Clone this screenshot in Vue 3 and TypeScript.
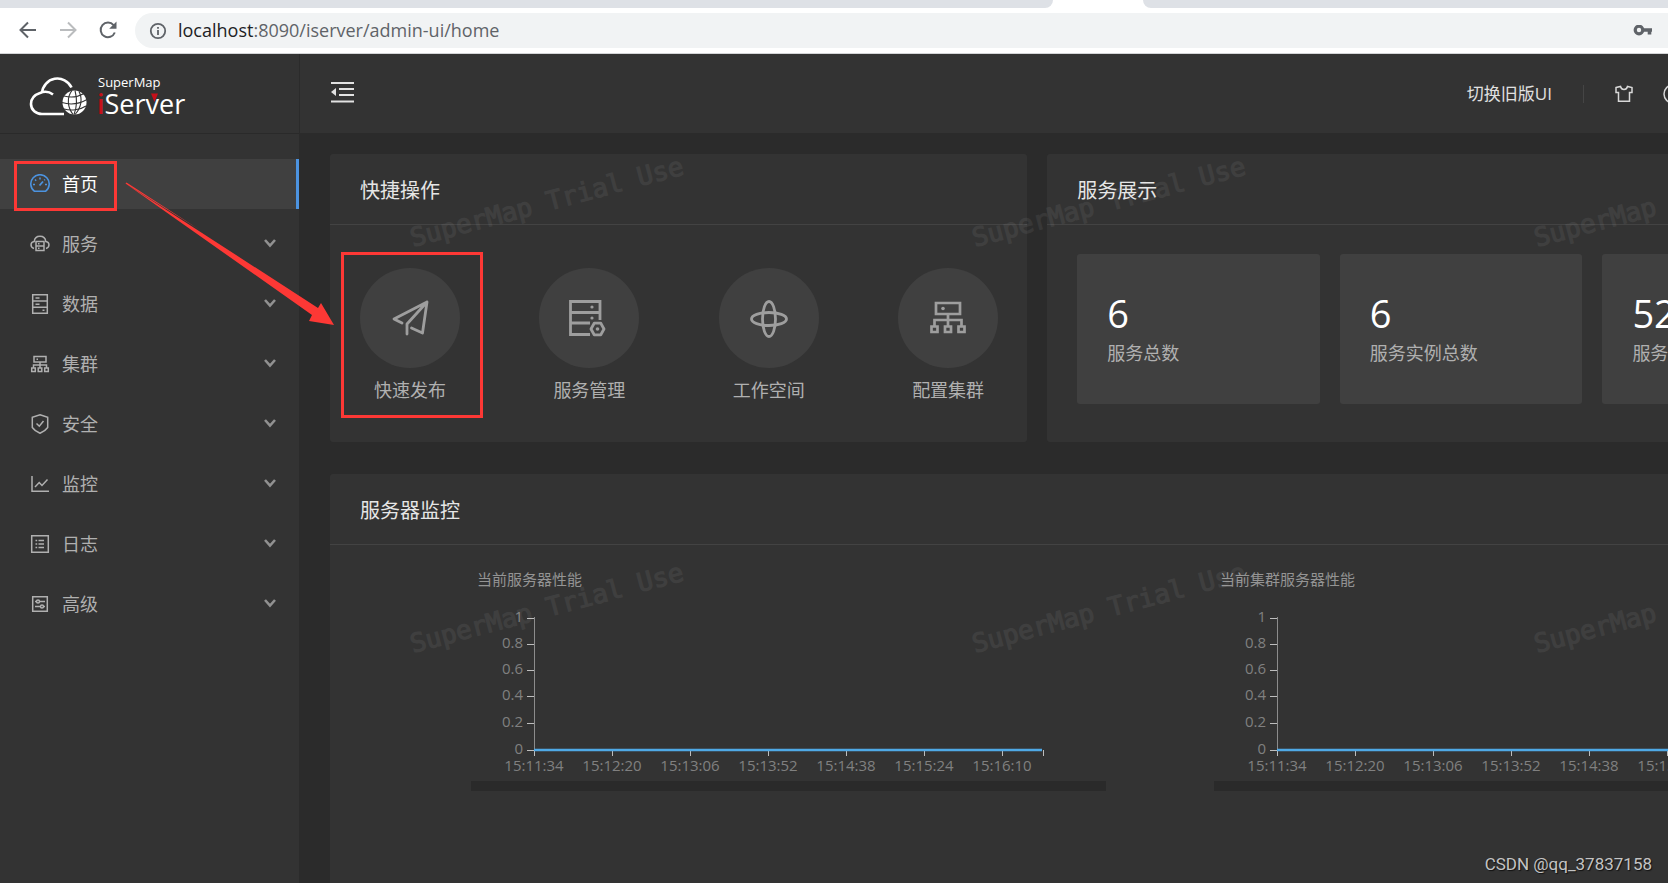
<script setup lang="ts">
interface MenuItem {
  label: string
  icon: string
  active?: boolean
}

interface Chart {
  title: string
}

const menu: MenuItem[] = [
  { label: '首页', icon: 'gauge', active: true },
  { label: '服务', icon: 'cloud' },
  { label: '数据', icon: 'data' },
  { label: '集群', icon: 'cluster' },
  { label: '安全', icon: 'shield' },
  { label: '监控', icon: 'chart' },
  { label: '日志', icon: 'log' },
  { label: '高级', icon: 'tune' },
]

const actions = [
  { label: '快速发布', icon: 'plane' },
  { label: '服务管理', icon: 'server' },
  { label: '工作空间', icon: 'orbit' },
  { label: '配置集群', icon: 'nodes' },
]

const stats = [
  { value: '6', label: '服务总数' },
  { value: '6', label: '服务实例总数' },
  { value: '52', label: '服务' },
]

const charts: Chart[] = [{ title: '当前服务器性能' }, { title: '当前集群服务器性能' }]

const times = ['15:11:34', '15:12:20', '15:13:06', '15:13:52', '15:14:38', '15:15:24', '15:16:10']
const xTicks = times.map((label, i) => ({ label, x: 63 + i * 78 }))
const yTicks = [
  { label: '1', y: 58 },
  { label: '0.8', y: 84 },
  { label: '0.6', y: 110 },
  { label: '0.4', y: 136 },
  { label: '0.2', y: 163 },
  { label: '0', y: 190 },
]

const stamps = [0, 1].flatMap((row) =>
  [0, 1, 2].map((col) => ({ x: 413 + col * 562, y: 247 + row * 406 })),
)
</script>

<template>
  <div class="window">
    <div class="browser">
      <div class="tabs">
        <div class="tabs-left"></div>
        <div class="tabs-right"></div>
      </div>
      <div class="toolbar">
        <button class="nav" type="button" aria-label="后退">
          <svg width="20" height="20" viewBox="0 0 20 20"><path d="M18 9H3M10 1.500L2.500 9L10 16.500" fill="none" stroke="#5f6368" stroke-width="2" /></svg>
        </button>
        <button class="nav" type="button" aria-label="前进">
          <svg width="20" height="20" viewBox="0 0 20 20"><path d="M2 9H17M10 1.500L17.500 9L10 16.500" fill="none" stroke="#babcbe" stroke-width="2" /></svg>
        </button>
        <button class="nav" type="button" aria-label="刷新">
          <svg width="20" height="20" viewBox="0 0 20 20"><path d="M16.800 11.500A7.300 7.300 0 1 1 15.600 4.200" fill="none" stroke="#5f6368" stroke-width="2" /><path d="M18.500 0.500V7.800H11.200Z" fill="#5f6368" /></svg>
        </button>
        <div class="address">
          <svg width="18" height="18" viewBox="0 0 18 18"><circle cx="9" cy="9" r="7.200" fill="none" stroke="#5f6368" stroke-width="1.800" /><path d="M9 8V13M9 5V6.800" stroke="#5f6368" stroke-width="1.800" /></svg>
          <span class="url"><b>localhost</b>:8090/iserver/admin-ui/home</span>
          <svg class="key" width="20" height="12" viewBox="0 0 20 12"><circle cx="6" cy="5" r="3.800" fill="none" stroke="#5f6368" stroke-width="3.200" /><path d="M10 5H19M16.500 5V9.500" fill="none" stroke="#5f6368" stroke-width="3.600" /></svg>
        </div>
      </div>
    </div>

    <div class="app">
      <aside class="sidebar">
        <div class="brand">
          <svg width="160" height="58" viewBox="0 -6 160 58" role="img" aria-label="SuperMap iServer">
            <g fill="none" stroke="#fff" stroke-width="2.600">
              <path d="M13 17A15.500 15.500 0 0 1 42.500 11.500" />
              <path d="M24 18.500C20 15.500 15 15.300 11 17C5 19 2 23 2 28C2 34 7 38 13 38H35" />
            </g>
            <circle cx="45.500" cy="26.500" r="12" fill="#fff" />
            <g fill="none" stroke="#333" stroke-width="1.100">
              <path d="M43 14.500C37 22 39 32 44 38.500M50 15.500C54 23 52 32 46 38.500M46 14.500C48 22 48 31 45 38.500" />
              <path d="M35 20C42 22 49 21 55 17.500M33 26.500C41 29 50 28 58 23.500M35 33C42 35 51 34 57 30" />
            </g>
            <text x="69" y="11" class="brand-small">SuperMap</text>
            <text x="68" y="38" class="brand-big"><tspan class="brand-red">i</tspan>Server</text>
            <path d="M122 17.500H129L125.500 26Z" fill="#c7101a" />
          </svg>
        </div>
        <nav class="menu">
          <a v-for="item in menu" :key="item.label" href="#" class="menu-item" :class="{ active: item.active }">
            <svg class="icon" width="20" height="20" viewBox="0 0 20 20" fill="none" stroke="currentColor" stroke-width="1.500">
              <template v-if="item.icon === 'gauge'">
                <path d="M4.500 17.300A9.200 9.200 0 1 1 15.500 17.300Z" stroke-width="1.600" />
                <path d="M9.500 11.500L13 7.500" stroke-width="1.800" />
                <path d="M3 10.500H5M15 10.500H17M10 3.500V5.500M5 5.500L6.200 6.700M15 5.500L14.200 6.300" />
              </template>
              <template v-else-if="item.icon === 'cloud'">
                <path d="M4 14.500C0 13.500 0 8 4.200 7.500C5 0.500 15 0.500 15.800 7.500C20 8 20 13.500 16 14.500" />
                <path d="M6 7.500H14V16.500H6ZM6 12H14M8 9.800H9.500M8 14.300H9.500" />
              </template>
              <template v-else-if="item.icon === 'data'">
                <path d="M2.700 0.700H17.300V19.300H2.700ZM2.700 7H17.300M2.700 13.300H17.300M5.500 4H9.500M5.500 10.200H9.500M12.500 16.300H14.500" />
              </template>
              <template v-else-if="item.icon === 'cluster'">
                <path d="M4 2.500H16V8H4ZM10 8V14M3.500 14V11H16.500V14M6.500 5.200H8M1.700 14H5.300V17.500H1.700ZM8.200 14H11.800V17.500H8.200ZM14.700 14H18.300V17.500H14.700Z" />
              </template>
              <template v-else-if="item.icon === 'shield'">
                <path d="M10 0.800L17.700 3.200V13.500C16 16 13 18 10 19.300C7 18 4 16 2.300 13.500V3.200Z" />
                <path d="M6.500 9.500L9.300 12.200L13.500 7" />
              </template>
              <template v-else-if="item.icon === 'chart'">
                <path d="M2 2V17.200H19M5 13L9.200 8.500L12 11.500L17.500 5.500" />
              </template>
              <template v-else-if="item.icon === 'log'">
                <path d="M1.700 1.700H18.300V18.300H1.700ZM5.500 6.500H7.200M8.500 6.500H14M5.500 10H7.200M8.500 10H14M5.500 13.500H7.200M8.500 13.500H14" />
              </template>
              <template v-else>
                <path d="M2.700 2.700H17.300V17.300H2.700ZM5 7.500H6.500M9.500 7.500H15M5 12.500H10.500M13.500 12.500H15" />
                <circle cx="8" cy="7.500" r="1.500" /><circle cx="12" cy="12.500" r="1.500" />
              </template>
            </svg>
            <span>{{ item.label }}</span>
            <svg v-if="!item.active" class="chevron" width="12" height="10" viewBox="0 0 12 10"><path d="M1 1L6 6.500L11 1" fill="none" stroke="#919191" stroke-width="2.600" /></svg>
          </a>
        </nav>
      </aside>

      <div class="body">
        <header class="header">
          <button class="plain" type="button" aria-label="折叠菜单">
            <svg width="24" height="28" viewBox="0 0 24 28"><path d="M0 3H23M8 9H23M8 15H23M0 21.500H23" stroke="#e2e2e2" stroke-width="2" /><path d="M0 12L5 8V16Z" fill="#e2e2e2" /></svg>
          </button>
          <div class="tools">
            <a href="#" class="switch">切换旧版UI</a>
            <span class="divider"></span>
            <button class="plain" type="button" aria-label="皮肤">
              <svg width="18" height="18" viewBox="0 0 18 18"><path d="M1 2.500L5.500 1.500C6.500 5.500 11.500 5.500 12.500 1.500L17 2.500V7.500H14.500V16.300H3.500V7.500H1Z" fill="none" stroke="#d8d8d8" stroke-width="1.500" /></svg>
            </button>
            <button class="plain help" type="button" aria-label="帮助">
              <svg width="20" height="20" viewBox="0 0 20 20" fill="none" stroke="#d8d8d8" stroke-width="1.500"><circle cx="10" cy="10" r="9" /><path d="M7.500 8A2.500 2.500 0 1 1 10 10.500V12M10 13.500V15" /></svg>
            </button>
          </div>
        </header>

        <main class="content">
          <section class="card quick">
            <h2>快捷操作</h2>
            <div class="actions">
              <a v-for="a in actions" :key="a.label" href="#" class="action">
                <span class="disc">
                  <svg width="40" height="40" viewBox="0 0 40 40" fill="none" stroke="#9e9e9e" stroke-width="2.800" stroke-linecap="round" stroke-linejoin="round">
                    <template v-if="a.icon === 'plane'">
                      <path d="M12 25L4 21L37 4L32.500 35L21.500 30M37 4L17 26V36" />
                    </template>
                    <template v-else-if="a.icon === 'server'">
                      <g stroke-linecap="butt" stroke-linejoin="miter">
                        <path d="M31 22V3.500H1.500V36.500H21M1.500 14.500H31M1.500 25H21" />
                        <path d="M22 31L25.200 25.200H31.800L35 31L31.800 36.800H25.200Z" stroke-linejoin="round" />
                      </g>
                      <g fill="#9e9e9e" stroke="none"><circle cx="23" cy="9" r="1.600" /><circle cx="23" cy="20" r="1.600" /><circle cx="28.500" cy="31" r="1.800" /></g>
                    </template>
                    <template v-else-if="a.icon === 'orbit'">
                      <ellipse cx="20" cy="21" rx="17.500" ry="6.500" /><ellipse cx="20" cy="21" rx="6.500" ry="17.500" />
                    </template>
                    <template v-else>
                      <g stroke-linecap="butt" stroke-linejoin="miter" stroke-width="2.700">
                        <path d="M8 5H32V16H8ZM20 16V28M6.500 28V22H33.500V28" />
                        <path d="M3.500 28.500H9.500V34H3.500ZM17 28.500H23V34H17ZM30.500 28.500H36.500V34H30.500Z" />
                      </g>
                      <circle cx="15" cy="10.500" r="1.800" fill="#9e9e9e" stroke="none" />
                    </template>
                  </svg>
                </span>
                <span>{{ a.label }}</span>
              </a>
            </div>
          </section>

          <section class="card show">
            <h2>服务展示</h2>
            <div class="stats">
              <div v-for="s in stats" :key="s.label" class="stat">
                <strong>{{ s.value }}</strong>
                <span>{{ s.label }}</span>
              </div>
            </div>
          </section>

          <section class="card monitor">
            <h2>服务器监控</h2>
            <div class="charts">
              <svg v-for="c in charts" :key="c.title" class="chart" viewBox="0 0 635 231" role="img" :aria-label="c.title">
                <text x="6" y="25" class="chart-title">{{ c.title }}</text>
                <path d="M63.500 57V190" stroke="#8c8c8c" />
                <g v-for="t in yTicks" :key="t.label">
                  <path :d="`M56 ${t.y + 0.5}H63`" stroke="#bdbdbd" />
                  <text x="52" :y="t.y + 4" text-anchor="end">{{ t.label }}</text>
                </g>
                <g v-for="t in xTicks" :key="t.label">
                  <path :d="`M${t.x + 0.5} 190V196`" stroke="#bdbdbd" />
                  <text :x="t.x" y="211" text-anchor="middle">{{ t.label }}</text>
                </g>
                <path d="M572.500 190V196" stroke="#bdbdbd" />
                <path d="M63 190H571" stroke="#4fa9e6" stroke-width="2.500" />
                <rect x="0" y="221" width="635" height="10" fill="#2a2a2a" />
              </svg>
            </div>
          </section>
        </main>
      </div>
    </div>

    <svg class="overlay" aria-hidden="true">
      <text v-for="(s, i) in stamps" :key="i" class="stamp" :transform="`translate(${s.x} ${s.y}) rotate(-15)`">SuperMap Trial Use</text>
      <g fill="none" stroke="#fd3835" stroke-width="3">
        <rect x="15.500" y="162.500" width="100" height="47" />
        <rect x="342.500" y="253.500" width="139" height="163" />
      </g>
      <path d="M125.500 183.500L318 308L321 303L334 325L309 321L312 315L125.500 183.500L126.500 182.500L200 230Z" fill="#fd3835" />
    </svg>
    <div class="credit">CSDN @qq_37837158</div>
  </div>
</template>

<style>
body {
  margin: 0;
  background: #2b2b2b;
}
</style>

<style scoped>
.window {
  position: relative;
  display: flex;
  flex-direction: column;
  height: 100vh;
  overflow: hidden;
  background: #2b2b2b;
  font-family: "Open Sans", "Noto Sans CJK SC", sans-serif;
  font-size: 18px;
  line-height: 24px;
  color: #b0b0b0;
}
.window * {
  box-sizing: border-box;
}
a {
  color: inherit;
  text-decoration: none;
}
button {
  display: flex;
  padding: 0;
  border: 0;
  background: none;
}
.browser {
  flex: none;
  background: #fff;
  border-bottom: 1px solid #d4d5d7;
}
.tabs {
  display: flex;
  gap: 90px;
  height: 8px;
}
.tabs-left {
  width: 1053px;
  background: #dee1e6;
  border-bottom-right-radius: 8px;
}
.tabs-right {
  flex: 1;
  background: #dee1e6;
  border-bottom-left-radius: 8px;
}
.toolbar {
  display: flex;
  align-items: center;
  gap: 20px;
  padding: 5px 0 5px 18px;
}
.address {
  flex: 1;
  display: flex;
  align-items: center;
  gap: 11px;
  height: 35px;
  margin-left: -3px;
  padding: 0 15px 0 14px;
  border-radius: 18px 0 0 18px;
  background: #f1f3f4;
}
.url {
  flex: 1;
  padding-bottom: 2px;
  color: #5f6368;
}
.url b {
  font-weight: 400;
  color: #202124;
}
.app {
  flex: 1;
  display: flex;
  min-width: 1903px;
  min-height: 0;
}
.sidebar {
  flex: none;
  width: 299px;
  background: #333;
}
.brand {
  height: 80px;
  padding: 16px 0 0 29px;
  border-bottom: 1px solid #2a2a2a;
}
.brand-small {
  font-size: 13px;
  fill: #fff;
}
.brand-big {
  font-size: 27px;
  font-weight: 500;
  fill: #fff;
}
.brand-red {
  font-weight: 600;
  fill: #c7101a;
}
.menu {
  display: flex;
  flex-direction: column;
  gap: 10px;
  padding-top: 25px;
}
.menu-item {
  display: flex;
  align-items: center;
  gap: 12px;
  height: 50px;
  padding: 0 23px 0 30px;
}
.menu-item.active {
  padding-right: 20px;
  border-right: 3px solid #4c93e0;
  background: #404040;
  color: #fff;
}
.active .icon {
  color: #4c93e0;
}
.chevron {
  margin-left: auto;
}
.body {
  flex: 1;
  min-width: 0;
}
.header {
  display: flex;
  align-items: center;
  height: 79px;
  margin-left: 1px;
  padding-left: 31px;
  background: #333;
}
.tools {
  display: flex;
  align-items: center;
  margin-left: auto;
  padding-right: 220px;
  color: #e0e0e0;
}
.switch {
  font-size: 17px;
}
.divider {
  width: 1px;
  height: 18px;
  margin: 0 31px;
  background: #454545;
}
.help {
  margin-left: 30px;
}
.content {
  display: grid;
  grid-template-columns: 16fr 19fr;
  gap: 32px 20px;
  padding: 21px 28px 0 31px;
}
.card {
  border-radius: 3px;
  background: #333;
}
.card h2 {
  margin: 0;
  padding: 21px 30px 18px;
  border-bottom: 1px solid #434343;
  font-size: 20px;
  line-height: 31px;
  font-weight: 400;
  color: #e6e6e6;
}
.quick,
.show {
  height: 288px;
}
.actions {
  display: flex;
  justify-content: space-between;
  padding: 43px 29px 0 30px;
}
.action {
  display: flex;
  flex-direction: column;
  align-items: center;
  gap: 10px;
  width: 100px;
}
.disc {
  display: grid;
  place-items: center;
  width: 100px;
  height: 100px;
  border-radius: 50%;
  background: #404040;
}
.stats {
  display: grid;
  grid-template-columns: repeat(3, 1fr);
  gap: 20px;
  padding: 29px 30px;
}
.stat {
  display: flex;
  flex-direction: column;
  gap: 8px;
  height: 150px;
  padding: 39px 30px;
  border-radius: 3px;
  background: #404040;
  white-space: nowrap;
}
.stat strong {
  font-size: 38px;
  line-height: 40px;
  font-weight: 400;
  color: #fff;
}
.monitor {
  grid-column: 1 / -1;
  height: 600px;
}
.charts {
  display: grid;
  grid-template-columns: 1fr 1fr;
  gap: 108px;
  padding: 15px 26px 0 141px;
}
.chart {
  display: block;
  width: 100%;
}
.chart text {
  font-size: 15px;
  fill: #808080;
}
.chart .chart-title {
  fill: #949494;
}
.overlay {
  position: absolute;
  inset: 0;
  width: 100%;
  height: 100%;
  pointer-events: none;
}
.stamp {
  font-family: "DejaVu Sans Mono", monospace;
  font-size: 26px;
  fill: #fff;
  stroke: #fff;
  stroke-width: 1px;
  opacity: 0.06;
}
.credit {
  position: absolute;
  right: 16px;
  bottom: 7px;
  font-family: Roboto, sans-serif;
  font-size: 17px;
  color: #c4c4c4;
  text-shadow: 1px 1px 1px #111;
}
</style>
